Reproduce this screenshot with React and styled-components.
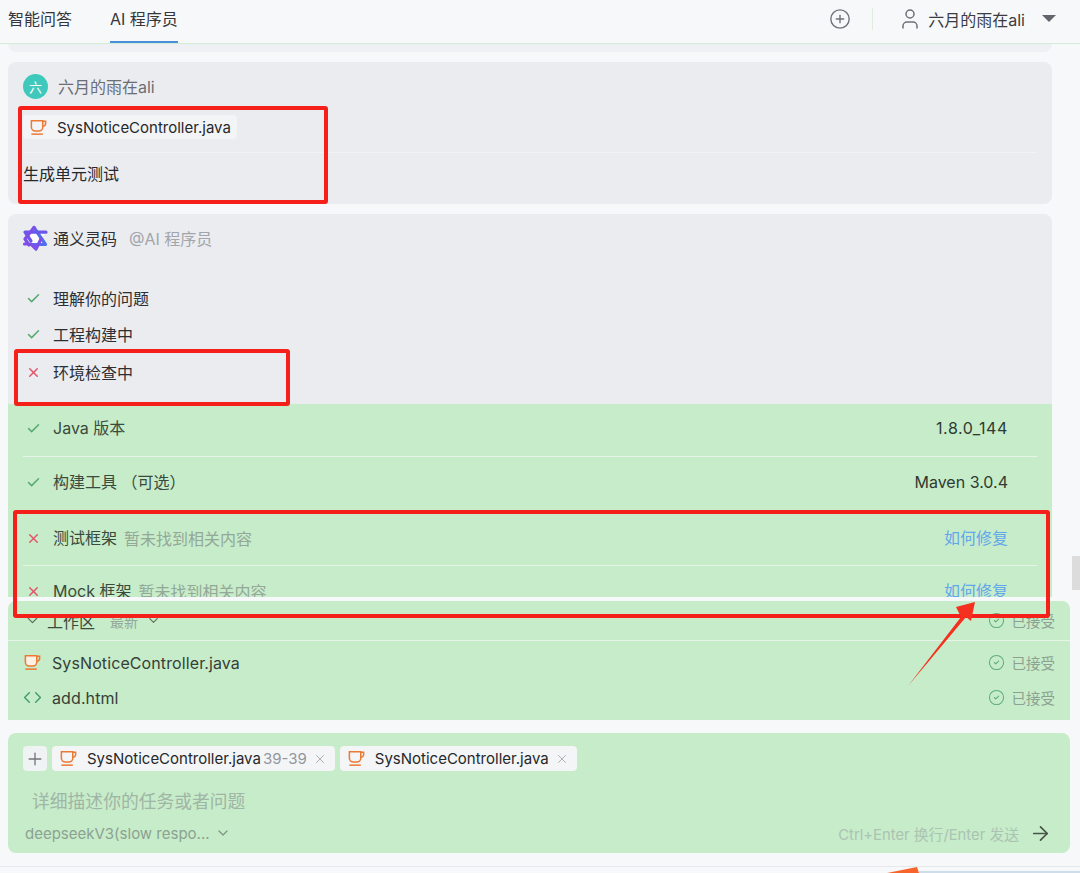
import React from "react";
import styled, { createGlobalStyle } from "styled-components";
import { Check, X, ChevronDown, ArrowRight, CircleCheck, CirclePlus, User, Code, Plus } from "lucide-react";

const GlobalStyle = createGlobalStyle`
  html, body {
    margin: 0;
    padding: 0;
    background: #f7f8fa;
  }
  * {
    box-sizing: border-box;
  }
  body {
    font-family: Inter, "Noto Sans CJK SC", sans-serif;
    color: #26282c;
  }
`;

const GREEN = "#c7ecc9";
const GRAY = "#ebecf0";

const Page = styled.div`
  position: relative;
  width: 1080px;
  height: 873px;
  overflow: hidden;
  background: #f7f8fa;
  display: flex;
  flex-direction: column;
`;

const Header = styled.header`
  height: 44px;
  flex: none;
  display: flex;
  align-items: stretch;
  border-bottom: 1px solid #d3ecd5;
  padding: 0 24px 0 8px;
`;

const Tab = styled.div`
  height: 43px;
  padding-bottom: 5px;
  margin-right: ${(p) => p.$gap || 0}px;
  display: flex;
  align-items: center;
  font-size: 16px;
  color: #34363b;
  border-bottom: 2px solid ${(p) => (p.$active ? "#4a8fdb" : "transparent")};
`;

const HeaderRight = styled.div`
  margin-left: auto;
  display: flex;
  align-items: center;
  padding-bottom: 6px;
  color: #6d7076;
`;

const Divider = styled.span`
  width: 1px;
  height: 22px;
  margin: 0 25px 0 21px;
  background: #e2ebe2;
`;

const UserName = styled.span`
  margin: 0 17px 0 6px;
  font-size: 16px;
  color: #3b3d42;
`;

const Caret = styled.span`
  width: 0;
  height: 0;
  border-left: 7.5px solid transparent;
  border-right: 7.5px solid transparent;
  border-top: 7px solid #62656b;
`;

const Messages = styled.div`
  height: 553px;
  flex: none;
  width: 1052px;
  padding-left: 8px;
  display: flex;
  flex-direction: column;
  gap: 10px;
  overflow: hidden;
`;

const CardTail = styled.div`
  height: 8px;
  flex: none;
  background: #eff0f3;
  border-radius: 0 0 8px 8px;
`;

const UserCard = styled.section`
  height: 142px;
  flex: none;
  background: ${GRAY};
  border-radius: 8px;
  padding: 11px 15px 0;
`;

const Author = styled.div`
  display: flex;
  align-items: center;
  height: 26px;
  gap: 10px;
  font-size: 16px;
  color: #6b6e75;
`;

const Avatar = styled.span`
  width: 25px;
  height: 25px;
  border-radius: 50%;
  background: #3fc9bd;
  color: #fff;
  font-size: 13px;
  display: flex;
  align-items: center;
  justify-content: center;
`;

const FileChip = styled.div`
  display: inline-flex;
  align-items: center;
  height: 24px;
  margin-top: 16px;
  padding: 0 6px 0 6px;
  gap: 9px;
  background: #f3f4f6;
  border-radius: 4px;
  font-size: 15px;
  color: #26282c;
`;

const Rule = styled.div`
  height: 1px;
  margin-top: 11px;
  background: #f1f2f4;
`;

const Prompt = styled.p`
  margin: 10px 0 0;
  font-size: 16px;
  line-height: 22px;
  color: #26282c;
`;

const AgentCard = styled.section`
  flex: 1;
  background: ${GRAY};
  border-radius: 8px 8px 0 0;
  overflow: hidden;
  display: flex;
  flex-direction: column;
`;

const AgentHead = styled.div`
  display: flex;
  align-items: center;
  height: 48px;
  flex: none;
  padding: 0 15px 0 14px;
  gap: 5px;
  font-size: 16px;
  color: #2d2f33;
`;

const Mention = styled.span`
  margin-left: 7px;
  color: #a2a5ab;
`;

const Steps = styled.div`
  padding: 18px 15px 0;
  height: 142px;
  flex: none;
`;

const Step = styled.div`
  display: flex;
  align-items: center;
  height: ${(p) => p.$h || 36}px;
  font-size: 16px;
  color: #2d2f33;
`;

const CheckList = styled.div`
  flex: 1;
  background: ${GREEN};
  padding: 0 15px;
`;

const CheckRow = styled.div`
  height: ${(p) => p.$h}px;
  padding: ${(p) => p.$top}px 29px 0 0;
  display: flex;
  align-items: flex-start;
  border-bottom: ${(p) => (p.$line ? "1px solid #e6f5e7" : "none")};
  font-size: 16px;
  line-height: 22px;
  color: #3a4a3d;
`;

const RowIcon = styled.span`
  width: 20px;
  margin-right: 10px;
  height: 22px;
  display: flex;
  align-items: center;
  justify-content: center;
  flex: none;
`;

const Hint = styled.span`
  margin-left: 7px;
  color: #93a898;
  margin-top: 1px;
`;

const Value = styled.span`
  margin-left: auto;
  color: #2f3a32;
  letter-spacing: ${(p) => p.$spacing || 0}px;
`;

const FixLink = styled.span`
  margin-left: auto;
  color: #62a7ea;
`;

const Workspace = styled.section`
  flex: none;
  height: 119px;
  margin: 4px 10px 0 8px;
  background: ${GREEN};
  border-radius: 8px 8px 0 0;
  font-size: 16px;
`;

const WorkspaceHead = styled.div`
  height: 40px;
  padding: 0 15px 0 16px;
  display: flex;
  align-items: center;
  border-bottom: 1px solid #e6f5e7;
  color: #3a4a3d;
`;

const SectionName = styled.span`
  margin-left: 6px;
`;

const Latest = styled.span`
  margin: 0 8px 0 15px;
  font-size: 14px;
  color: #93a898;
`;

const WorkspaceRows = styled.div`
  padding-top: 4px;
`;

const FileRow = styled.div`
  height: 35px;
  padding: 0 15px 0 15px;
  display: flex;
  align-items: center;
  color: #354038;
`;

const FileName = styled.span`
  margin-left: 10px;
  letter-spacing: 0.1px;
`;

const Accepted = styled.span`
  margin-left: auto;
  display: flex;
  align-items: center;
  gap: 7px;
  font-size: 14.5px;
  color: #8ba292;
`;

const InputBox = styled.section`
  flex: none;
  height: 120px;
  margin: 13px 10px 0 8px;
  background: ${GREEN};
  border-radius: 8px;
  padding: 13px 18px 0 15px;
  display: flex;
  flex-direction: column;
`;

const ChipRow = styled.div`
  display: flex;
  gap: 5px;
  height: 25px;
`;

const PlusButton = styled.span`
  width: 24px;
  height: 25px;
  background: #f0f3f3;
  border-radius: 4px;
  color: #73767c;
  display: flex;
  align-items: center;
  justify-content: center;
`;

const ContextChip = styled.div`
  display: flex;
  align-items: center;
  height: 25px;
  padding: 0 8px 0 7px;
  background: #f3f5f6;
  border-radius: 4px;
  font-size: 15px;
  color: #26282c;
`;

const ChipName = styled.span`
  margin-left: 9px;
`;

const LineRange = styled.span`
  margin-left: 2px;
  color: #93969c;
`;

const ChipClose = styled.span`
  margin-left: 6px;
  display: flex;
  color: #a8abb0;
`;

const Placeholder = styled.div`
  margin: 19px 0 0 9px;
  font-size: 17.8px;
  line-height: 24px;
  color: #9fb5a5;
`;

const InputFooter = styled.div`
  margin-top: 8px;
  display: flex;
  align-items: center;
  height: 22px;
`;

const ModelName = styled.span`
  font-size: 15px;
  color: #8ba292;
  margin: 0 5px 0 2px;
`;

const SendHint = styled.span`
  margin-left: auto;
  margin-right: 10px;
  font-size: 14.8px;
  color: #abc3b3;
`;

const PageFooter = styled.div`
  margin-top: 13px;
  flex: 1;
  border-top: 1px solid #e7e8eb;
`;

const Scrollbar = styled.div`
  position: absolute;
  top: 556px;
  right: 0;
  width: 8px;
  height: 34px;
  background: #dcdcdc;
`;

const RedBox = styled.div`
  position: absolute;
  left: ${(p) => p.$x}px;
  top: ${(p) => p.$y}px;
  width: ${(p) => p.$w}px;
  height: ${(p) => p.$h}px;
  border: 4px solid #f5201a;
  border-radius: 3px;
  pointer-events: none;
`;

const ArrowOverlay = styled.svg`
  position: absolute;
  left: 0;
  top: 0;
  pointer-events: none;
`;

const Cup = ({ fill = "none", size = 19 }) => (
  <svg width={size} height={size} viewBox="0 0 20 20" fill="none" style={{ flex: "none" }}>
    <path d="M2.5 3h12v6.5a4.2 4.2 0 0 1-4.2 4.2H6.7a4.2 4.2 0 0 1-4.2-4.2V3z" fill={fill} stroke="#ec7a35" strokeWidth="1.6" />
    <path d="M14.5 3.5h3v2.2a3 3 0 0 1-3 3" stroke="#ec7a35" strokeWidth="1.6" />
    <path d="M2.5 17h12" stroke="#ec7a35" strokeWidth="1.6" />
  </svg>
);

const LingmaLogo = () => (
  <svg width="26" height="26" viewBox="0 0 26 26" fill="none" style={{ flex: "none" }}>
    <path d="M12 3 L23 19.5 H3.5 Z" fill="#fff" />
    <path d="M3 7 H23.5 L14 23.5 Z" fill="#fff" />
    <path d="M12 2.5 L23.5 19.5 H11" stroke="#4f6fee" strokeWidth="3.2" strokeLinejoin="round" strokeLinecap="round" />
    <path d="M24 7.2 H3 L9 16" stroke="#6b57ea" strokeWidth="3.2" strokeLinejoin="round" strokeLinecap="round" />
    <path d="M12 2.5 L3 14 L7 20 M2.5 19 H9 L14 24 L19 14" stroke="#7d4fe8" strokeWidth="3.2" strokeLinejoin="round" strokeLinecap="round" />
  </svg>
);

const StatusIcon = ({ ok }) =>
  ok ? <Check size={15} color="#55a970" strokeWidth={2.4} /> : <X size={15} color="#e2566a" strokeWidth={2.4} />;

const fileRows = [
  { name: "SysNoticeController.java", icon: <Cup fill="#fdf1e6" /> },
  { name: "add.html", icon: <Code size={19} color="#3f9d6d" strokeWidth={1.8} /> },
];

function App() {
  return (
    <Page>
      <GlobalStyle />
      <Header>
        <Tab $gap={38}>智能问答</Tab>
        <Tab $active>AI 程序员</Tab>
        <HeaderRight>
          <CirclePlus size={22} strokeWidth={1.5} />
          <Divider />
          <User size={24} strokeWidth={1.5} />
          <UserName>六月的雨在ali</UserName>
          <Caret />
        </HeaderRight>
      </Header>

      <Messages>
        <CardTail />
        <UserCard>
          <Author>
            <Avatar>六</Avatar>
            六月的雨在ali
          </Author>
          <FileChip>
            <Cup />
            SysNoticeController.java
          </FileChip>
          <Rule />
          <Prompt>生成单元测试</Prompt>
        </UserCard>

        <AgentCard>
          <AgentHead>
            <LingmaLogo />
            通义灵码
            <Mention>@AI 程序员</Mention>
          </AgentHead>
          <Steps>
            <Step>
              <RowIcon><StatusIcon ok /></RowIcon>
              理解你的问题
            </Step>
            <Step>
              <RowIcon><StatusIcon ok /></RowIcon>
              工程构建中
            </Step>
            <Step $h={40}>
              <RowIcon><StatusIcon /></RowIcon>
              环境检查中
            </Step>
          </Steps>
          <CheckList>
            <CheckRow $h={53} $top={13} $line>
              <RowIcon><StatusIcon ok /></RowIcon>
              Java 版本
              <Value $spacing={0.6}>1.8.0_144</Value>
            </CheckRow>
            <CheckRow $h={54} $top={14}>
              <RowIcon><StatusIcon ok /></RowIcon>
              构建工具 （可选）
              <Value>Maven 3.0.4</Value>
            </CheckRow>
            <CheckRow $h={55} $top={16} $line>
              <RowIcon><StatusIcon /></RowIcon>
              测试框架
              <Hint>暂未找到相关内容</Hint>
              <FixLink>如何修复</FixLink>
            </CheckRow>
            <CheckRow $h={40} $top={14}>
              <RowIcon><StatusIcon /></RowIcon>
              Mock 框架
              <Hint>暂未找到相关内容</Hint>
              <FixLink>如何修复</FixLink>
            </CheckRow>
          </CheckList>
        </AgentCard>
      </Messages>

      <Workspace>
        <WorkspaceHead>
          <ChevronDown size={17} strokeWidth={1.8} color="#5d6f62" />
          <SectionName>工作区</SectionName>
          <Latest>最新</Latest>
          <ChevronDown size={15} strokeWidth={1.8} color="#5d6f62" />
          <Accepted>
            <CircleCheck size={17} strokeWidth={1.5} color="#5fae78" />
            已接受
          </Accepted>
        </WorkspaceHead>
        <WorkspaceRows>
          {fileRows.map((row) => (
            <FileRow key={row.name}>
              {row.icon}
              <FileName>{row.name}</FileName>
              <Accepted>
                <CircleCheck size={17} strokeWidth={1.5} color="#5fae78" />
                已接受
              </Accepted>
            </FileRow>
          ))}
        </WorkspaceRows>
      </Workspace>

      <InputBox>
        <ChipRow>
          <PlusButton><Plus size={20} strokeWidth={1.6} /></PlusButton>
          <ContextChip>
            <Cup />
            <ChipName>SysNoticeController.java</ChipName>
            <LineRange>39-39</LineRange>
            <ChipClose><X size={14} strokeWidth={1.6} /></ChipClose>
          </ContextChip>
          <ContextChip>
            <Cup />
            <ChipName>SysNoticeController.java</ChipName>
            <ChipClose><X size={14} strokeWidth={1.6} /></ChipClose>
          </ContextChip>
        </ChipRow>
        <Placeholder>详细描述你的任务或者问题</Placeholder>
        <InputFooter>
          <ModelName>deepseekV3(slow respo...</ModelName>
          <ChevronDown size={16} strokeWidth={1.8} color="#7d9485" />
          <SendHint>Ctrl+Enter 换行/Enter 发送</SendHint>
          <ArrowRight size={23} strokeWidth={1.8} color="#4a5349" />
        </InputFooter>
      </InputBox>

      <PageFooter />

      <Scrollbar />
      <RedBox $x={18} $y={106} $w={310} $h={98} />
      <RedBox $x={14} $y={349} $w={276} $h={57} />
      <RedBox $x={13} $y={510} $w={1037} $h={108} />
      <ArrowOverlay width="1080" height="873" viewBox="0 0 1080 873">
        <polygon points="908,686 961,617 956,607 975,602 971,621 966,617" fill="#f5301f" />
        <polygon points="887,873 917,867 919,873" fill="#f8652c" />
        <rect x="919" y="871" width="161" height="2" fill="#cfdcea" />
      </ArrowOverlay>
    </Page>
  );
}

export default App;
